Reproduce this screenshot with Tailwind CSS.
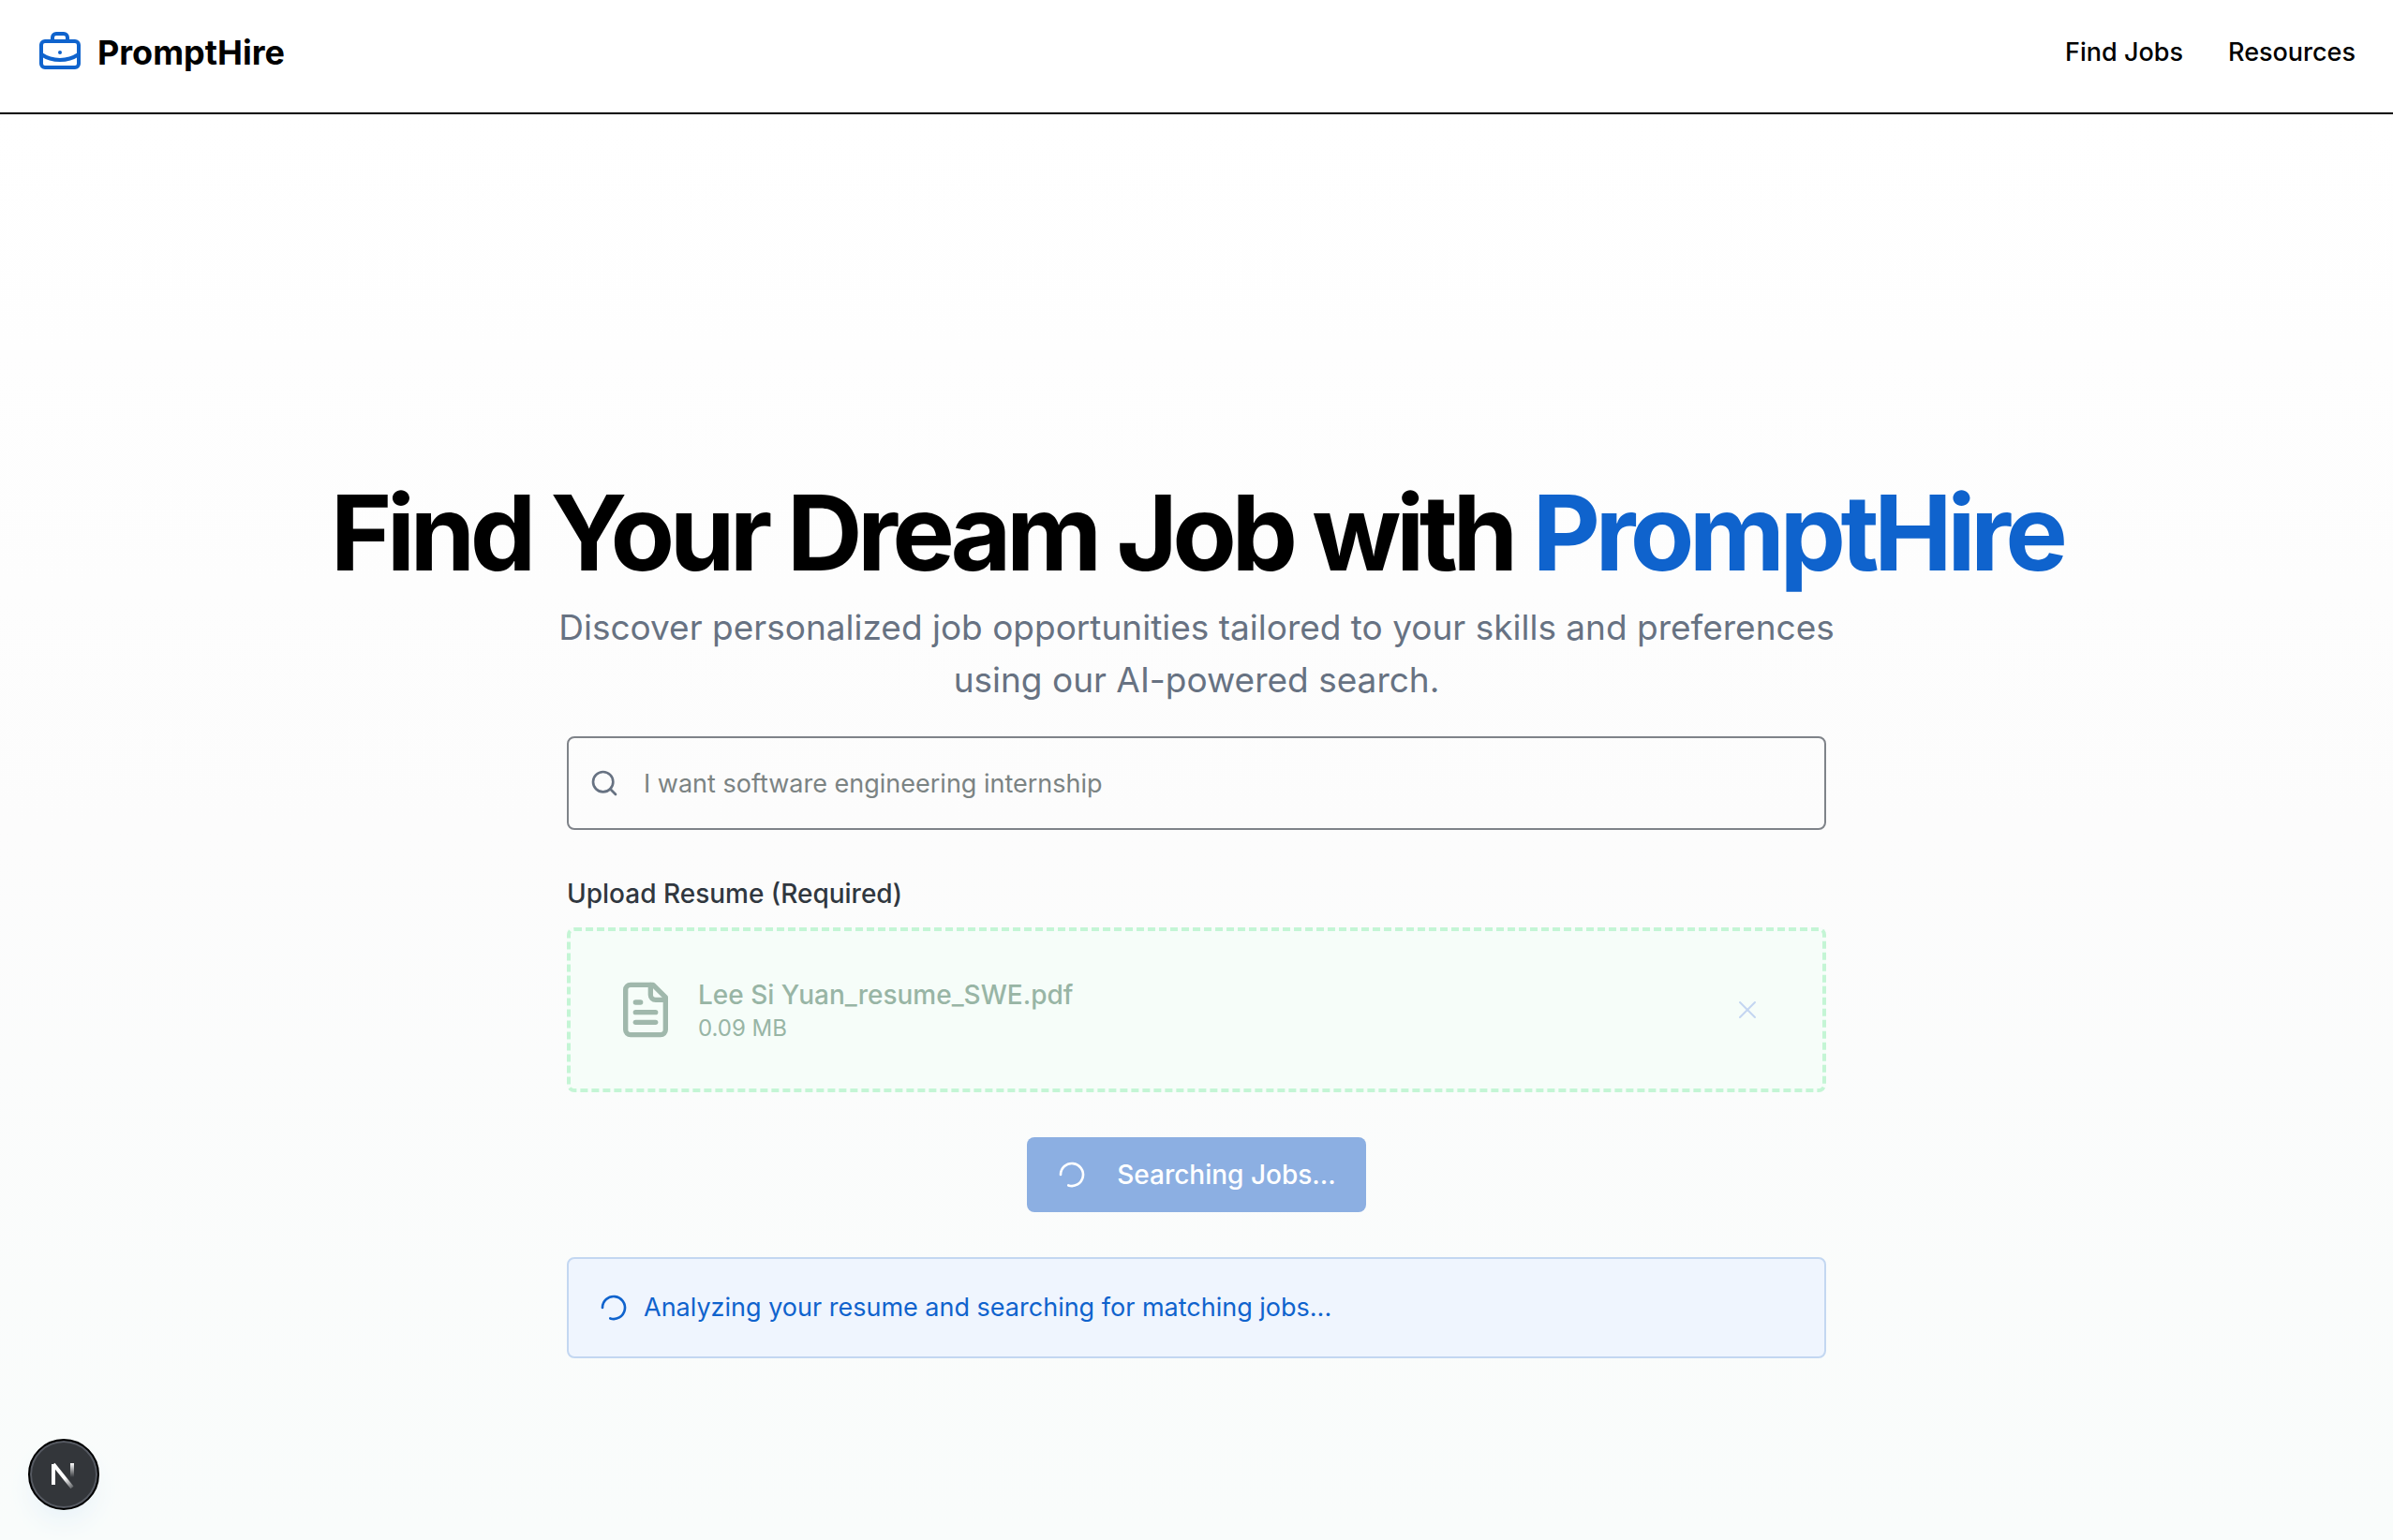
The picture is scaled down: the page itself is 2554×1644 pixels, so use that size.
<!DOCTYPE html>
<html lang="en">
  <head>
    <meta charset="utf-8">
    <meta name="viewport" content="width=device-width, initial-scale=1">
    <script src="https://cdn.jsdelivr.net/npm/@tailwindcss/browser@4"></script>
    <title>PromptHire</title>
  </head>
  <body class="flex min-h-screen flex-col bg-white font-['Inter','Liberation_Sans',sans-serif] text-[28px] leading-10 text-black">
    <header class="flex items-center justify-between border-b-2 border-black bg-white px-10 pt-8 pb-10">
      <a href="#" class="flex items-center gap-4">
        <svg class="size-12 text-[#0f63cd]" viewBox="0 0 24 24" fill="none" stroke="currentColor" stroke-width="2" stroke-linecap="round" stroke-linejoin="round">
          <path d="M12 12h.01" />
          <path d="M16 6V4a2 2 0 0 0-2-2h-4a2 2 0 0 0-2 2v2" />
          <path d="M22 13a18.15 18.15 0 0 1-20 0" />
          <rect width="20" height="14" x="2" y="6" rx="2" />
        </svg>
        <span class="text-4xl font-bold">PromptHire</span>
      </a>
      <nav class="flex gap-12 text-[27px] font-medium">
        <a href="#">Find Jobs</a>
        <a href="#">Resources</a>
      </nav>
    </header>

    <main class="flex flex-1 flex-col items-center bg-linear-to-b from-white via-[#fcfcfc] to-[#f9fcfb] px-12 pt-96 pb-12">
      <h1 class="text-center text-[112px] leading-[124px] font-bold tracking-tighter">
        Find Your Dream Job with <span class="text-[#0f63cd]">PromptHire</span>
      </h1>
      <p class="mt-3 max-w-[1400px] text-center text-[37px] leading-14 text-[#677282]">
        Discover personalized job opportunities tailored to your skills and preferences using our AI-powered search.
      </p>

      <form class="mt-8 flex w-full max-w-[1344px] flex-col gap-12" onsubmit="return false">
        <div class="flex h-25 items-center gap-[26px] rounded-lg border-2 border-[#7f8389] pl-[22px]">
          <svg class="size-8 shrink-0 text-[#677282]" viewBox="0 0 24 24" fill="none" stroke="currentColor" stroke-width="2" stroke-linecap="round" stroke-linejoin="round">
            <circle cx="11" cy="11" r="8" />
            <path d="m21 21-4.3-4.3" />
          </svg>
          <input type="text" aria-label="Job search" value="I want software engineering internship" class="h-full flex-1 bg-transparent text-[27px] text-[#7b8383] outline-none" disabled>
        </div>

        <div>
          <label for="resume" class="mb-4 block font-medium text-[#30373f]">Upload Resume (Required)</label>
          <input id="resume" type="file" accept=".pdf" class="hidden">
          <div class="flex items-center gap-6 rounded-lg border-4 border-dashed border-[#c4f5d5] bg-[#f6fdf9] p-12">
            <svg class="size-16 text-[#a0b8ac]" viewBox="0 0 24 24" fill="none" stroke="currentColor" stroke-width="2" stroke-linecap="round" stroke-linejoin="round">
              <path d="M15 2H6a2 2 0 0 0-2 2v16a2 2 0 0 0 2 2h12a2 2 0 0 0 2-2V7Z" />
              <path d="M14 2v4a2 2 0 0 0 2 2h4" />
              <path d="M10 9H8" />
              <path d="M16 13H8" />
              <path d="M16 17H8" />
            </svg>
            <div class="flex-1 text-[#98b5a5]">
              <p class="font-medium">Lee Si Yuan_resume_SWE.pdf</p>
              <p class="text-2xl leading-8">0.09 MB</p>
            </div>
            <button type="button" aria-label="Remove file" class="flex size-16 items-center justify-center" disabled>
              <svg class="size-8 text-[#c3d5f1]" viewBox="0 0 24 24" fill="none" stroke="currentColor" stroke-width="1.5" stroke-linecap="round" stroke-linejoin="round">
                <path d="M18 6 6 18" />
                <path d="m6 6 12 12" />
              </svg>
            </button>
          </div>
        </div>

        <button type="submit" class="flex h-20 items-center gap-8 self-center rounded-lg bg-[#8cafe2] px-8 font-medium text-white" disabled>
          <svg class="size-8 rotate-180" viewBox="0 0 24 24" fill="none" stroke="currentColor" stroke-width="2" stroke-linecap="round" stroke-linejoin="round">
            <path d="M21 12a9 9 0 1 1-6.219-8.56" />
          </svg>
          Searching Jobs...
        </button>

        <div role="status" class="flex items-center gap-4 rounded-lg border-2 border-[#c3d7f1] bg-[#eff5fe] p-8 text-[27px] text-[#0f63cd]">
          <svg class="size-8 rotate-180" viewBox="0 0 24 24" fill="none" stroke="currentColor" stroke-width="2" stroke-linecap="round" stroke-linejoin="round">
            <path d="M21 12a9 9 0 1 1-6.219-8.56" />
          </svg>
          <p>Analyzing your resume and searching for matching jobs...</p>
        </div>
      </form>
    </main>

    <!-- Dev tools badge -->
    <button type="button" aria-label="Open Next.js Dev Tools" class="fixed bottom-8 left-[30px] flex size-19 items-center justify-center rounded-full border-2 border-black bg-[#33363a] shadow-[inset_0_0_0_2px_#565a62,0_16px_32px_-8px_#e4f0f8]">
      <svg class="size-10" viewBox="0 0 40 40" fill="none" stroke-width="4">
        <defs>
          <linearGradient id="diagonal" x1="10" y1="8" x2="30" y2="34" gradientUnits="userSpaceOnUse">
            <stop offset="0.6" stop-color="#fff" />
            <stop offset="1" stop-color="#fff" stop-opacity="0.2" />
          </linearGradient>
          <linearGradient id="stem" x1="28" y1="8" x2="28" y2="23" gradientUnits="userSpaceOnUse">
            <stop stop-color="#fff" />
            <stop offset="1" stop-color="#fff" stop-opacity="0" />
          </linearGradient>
        </defs>
        <path d="M9 31V9" stroke="#fff" />
        <path d="M9 9 29 34" stroke="url(#diagonal)" />
        <path d="M27 8h4v15h-4z" fill="url(#stem)" />
      </svg>
    </button>
  </body>
</html>
